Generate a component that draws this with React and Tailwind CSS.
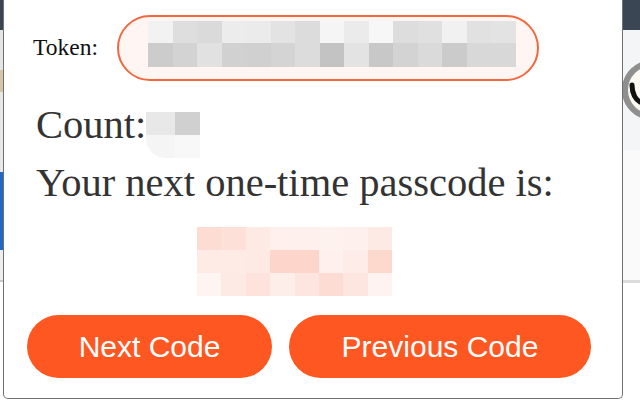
import React from 'react'

const tokenRows = [
  ['bg-[#f2f2f2]', 'bg-[#dedede]', 'bg-[#dadada]', 'bg-[#ececec]', 'bg-[#ebebeb]', 'bg-[#e3e3e3]', 'bg-[#dcdcdc]', 'bg-[#f5f5f5]', 'bg-[#ebebeb]', 'bg-[#f7f7f7]', 'bg-[#dddddd]', 'bg-[#e0e0e0]', 'bg-[#f1f1f1]', 'bg-[#e1e1e1]', 'bg-[#e3e3e3]'],
  ['bg-[#cccccc]', 'bg-[#d3d3d3]', 'bg-[#e1e1e1]', 'bg-[#d1d1d1]', 'bg-[#d0d0d0]', 'bg-[#d4d4d4]', 'bg-[#dcdcdc]', 'bg-[#c3c3c3]', 'bg-[#e3e3e3]', 'bg-[#c8c8c8]', 'bg-[#d3d3d3]', 'bg-[#dadada]', 'bg-[#cbcbcb]', 'bg-[#d8d8d8]', 'bg-[#d8d8d8]'],
]

const codeRows = [
  ['bg-[#fddcd3]', 'bg-[#fde0d8]', 'bg-[#feeae5]', 'bg-[#fef0ec]', 'bg-[#fef0ec]', 'bg-[#fef2ef]', 'bg-[#fef0ec]', 'bg-[#feeae5]'],
  ['bg-[#feebe6]', 'bg-[#feebe6]', 'bg-[#feeae5]', 'bg-[#fdd5ca]', 'bg-[#fdd5ca]', 'bg-[#fef0ec]', 'bg-[#fdece8]', 'bg-[#fdd8cd]'],
  ['bg-[#fef5f3]', 'bg-[#feeae5]', 'bg-[#fde3dc]', 'bg-[#feeeea]', 'bg-[#fde6e0]', 'bg-[#fddcd3]', 'bg-[#fde6e0]', 'bg-[#fef3f0]'],
]

function Mosaic({ rows, cell, heights }) {
  return (
    <div className="flex flex-col">
      {rows.map((row, i) => (
        <div key={i} className="flex" style={{ height: heights[i] }}>
          {row.map((c, j) => (
            <div key={j} className={c} style={{ width: cell }} />
          ))}
        </div>
      ))}
    </div>
  )
}

function RightEdge() {
  return (
    <div className="w-[17px] h-full flex flex-col">
      <div className="h-[30px] bg-[#3a4654]" />
      <div className="h-[120px] bg-[#f4f5f7]">
        <svg width="17" height="120" viewBox="0 0 17 120">
          <circle cx="29" cy="60" r="27" fill="#fbf8f1" stroke="#8f8f8f" strokeWidth="6" />
          <path d="M9 55 C 9 64, 13 70, 17 72" stroke="#111" strokeWidth="5" fill="none" strokeLinecap="round" />
        </svg>
      </div>
      <div className="h-[130px] bg-[#fafafa]" />
      <div className="h-[3px] bg-[#dcdcdc]" />
      <div className="flex-1 bg-white" />
    </div>
  )
}

function LeftEdge() {
  return (
    <div className="w-[3px] h-full flex flex-col">
      <div className="h-[30px] bg-[#3a4552]" />
      <div className="h-[40px] bg-[#e4e4e4]" />
      <div className="h-[22px] bg-[#d6c6a6]" />
      <div className="h-[80px] bg-[#e8e8e8]" />
      <div className="h-[78px] bg-[#2168c8]" />
      <div className="h-[30px] bg-[#eeeeee]" />
      <div className="h-[2px] bg-[#c8c8c8]" />
      <div className="flex-1 bg-white" />
    </div>
  )
}

export default function App() {
  return (
    <div className="w-[640px] h-[400px] flex overflow-hidden bg-white">
      <LeftEdge />

      <div className="w-[620px] h-[399px] box-border bg-white border-x border-b border-[#6e7277] rounded-b-[5px] flex flex-col">
        <div className="flex items-center pt-[15px] pl-[29px]">
          <span className="w-[65px] text-[23.5px] text-[#111] font-['Liberation_Serif',serif] leading-none">Token:</span>
          <div className="ml-[19px] w-[422px] h-[66px] box-border rounded-full border-2 border-[#f4683e] bg-[#fff6f3] pl-[29px] pt-[4px]">
            <Mosaic rows={tokenRows} cell="24.5px" heights={['22px', '24px']} />
          </div>
        </div>

        <div className="mt-[21px] h-[46px] pl-[32px] flex items-start font-['Liberation_Serif',serif] text-[40.5px] leading-[46px] text-[#333]">
          <span>Count:</span>
          <div className="mt-[10px] flex flex-col">
            <div className="flex h-[23px]">
              <div className="w-[29px] bg-[#e8e8e8]" />
              <div className="w-[25px] bg-[#d0d0d0]" />
            </div>
            <div className="flex h-[23px]">
              <div className="w-[29px] bg-[#f5f5f5] rounded-bl-[20px]" />
              <div className="w-[25px] bg-[#f8f8f8]" />
            </div>
          </div>
        </div>

        <div className="mt-[12px] h-[46px] pl-[32px] font-['Liberation_Serif',serif] text-[40.5px] leading-[46px] text-[#333] whitespace-nowrap">
          Your next one-time passcode is:
        </div>

        <div className="mt-[21px] ml-[193px]">
          <Mosaic rows={codeRows} cell="24.4px" heights={['23px', '23px', '23px']} />
        </div>

        <div className="mt-[19px] pl-[23px] flex gap-[17px] font-['Liberation_Sans',Arial,sans-serif] text-[30px] text-white">
          <button className="w-[245px] h-[63px] rounded-full bg-[#ff5722] flex items-center justify-center">
            Next Code
          </button>
          <button className="w-[302px] h-[63px] rounded-full bg-[#ff5722] flex items-center justify-center">
            Previous Code
          </button>
        </div>
      </div>

      <RightEdge />
    </div>
  )
}
